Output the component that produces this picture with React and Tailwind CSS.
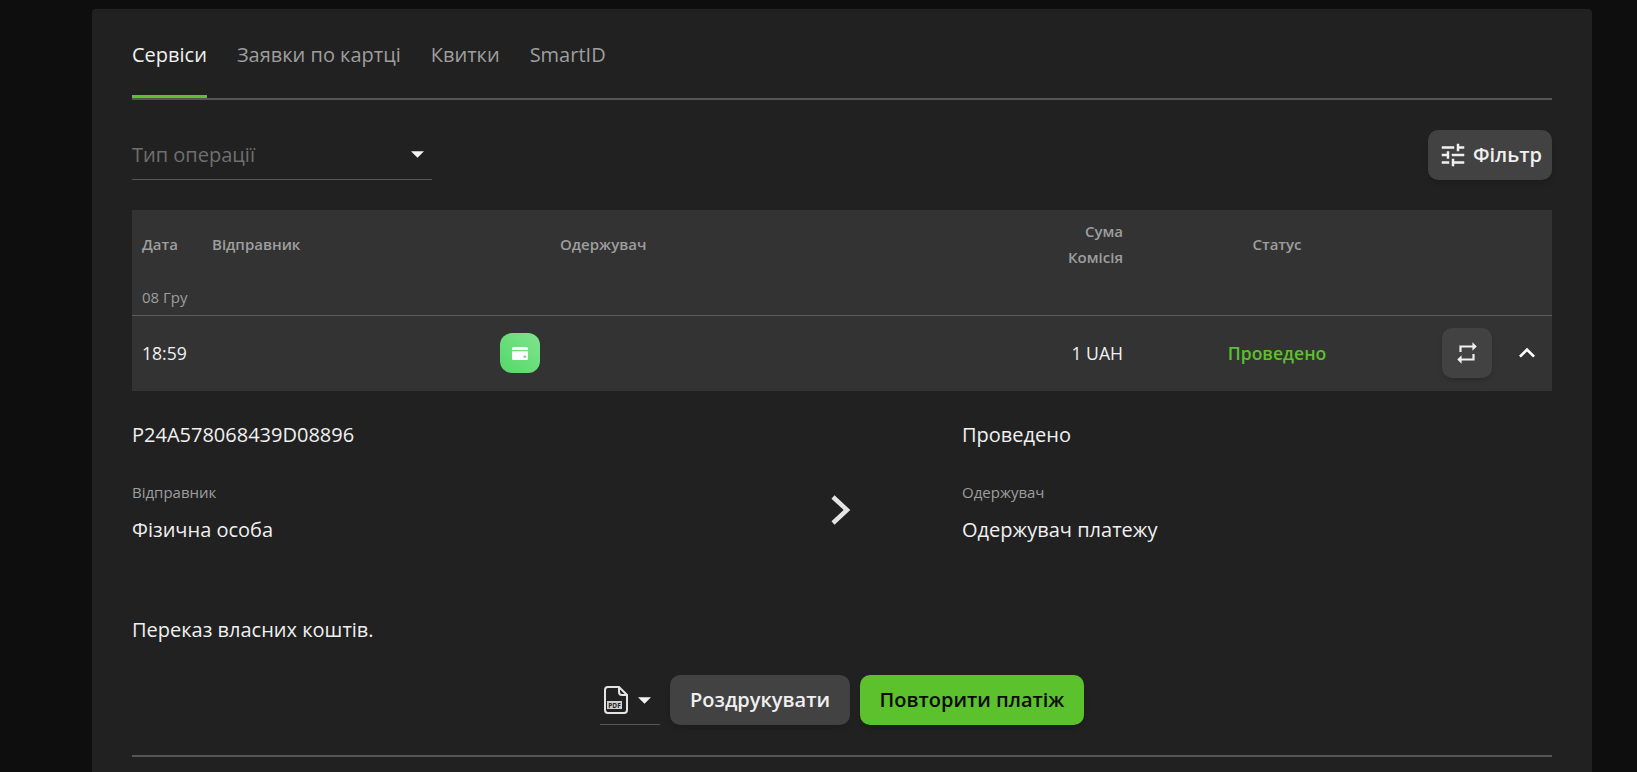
import { MdTune, MdRepeat, MdKeyboardArrowUp } from "react-icons/md";

const tabs = ["Заявки по картці", "Квитки", "SmartID"];

const Caret = ({ className }) => (
  <svg width="13" height="7" viewBox="0 0 14 7" className={className}>
    <path d="M0 0h14L7 7z" fill="#f2f2f2" />
  </svg>
);

const PdfIcon = () => (
  <svg width="24" height="28" viewBox="0 0 24 28" fill="none">
    <path d="M4 1h11l8 8v15a3 3 0 0 1-3 3H4a3 3 0 0 1-3-3V4a3 3 0 0 1 3-3z" stroke="#e4e4e4" strokeWidth="2" />
    <path d="M15 1v5a3 3 0 0 0 3 3h5" stroke="#e4e4e4" strokeWidth="2" />
    <rect x="3" y="15" width="15" height="8" fill="#cfcfcf" />
    <text x="10.5" y="21.5" textAnchor="middle" fontSize="6.5" fontWeight="700" fill="#212121" fontFamily="'Open Sans', sans-serif">PDF</text>
  </svg>
);

const CardIcon = () => (
  <svg width="16" height="13" viewBox="0 0 16 13">
    <path d="M1.5 0h13A1.5 1.5 0 0 1 16 1.5V3H0V1.5A1.5 1.5 0 0 1 1.5 0z" fill="#fff" />
    <path d="M0 4.2h16v7.3a1.5 1.5 0 0 1-1.5 1.5h-13A1.5 1.5 0 0 1 0 11.5z" fill="#fff" />
    <rect x="11.5" y="8.8" width="2.5" height="1.8" fill="#5fd672" />
  </svg>
);

export default function App() {
  return (
    <div className="h-screen overflow-hidden bg-[#0e0e0e] font-['Open_Sans',sans-serif] pt-[9px]">
      <div className="ml-[92px] w-[1500px] h-[900px] bg-[#212121] rounded-t px-10">
        {/* tabs */}
        <div className="flex gap-[30px] h-[91px] border-b-2 border-[#555555] text-[20px] text-[#9e9e9e]">
          <div className="text-[#f0f0f0] h-[89px] border-b-[3px] border-[#5bc12c] pt-[32px] leading-[28px]">Сервіси</div>
          {tabs.map((t) => (
            <div key={t} className="pt-[32px] leading-[28px]">{t}</div>
          ))}
        </div>

        {/* filter row */}
        <div className="flex justify-between items-start mt-[30px]">
          <div className="w-[300px] h-[50px] border-b border-[#555555] flex items-center justify-between pr-[8px] text-[20px] text-[#6f6f6f]">
            <span>Тип операції</span>
            <Caret />
          </div>
          <button className="w-[124px] h-[50px] rounded-[10px] bg-[#424242] shadow-md flex items-center justify-center gap-[5px] text-[#f0f0f0] text-[20px] font-semibold">
            <MdTune size={30} />
            <span>Фільтр</span>
          </button>
        </div>

        {/* table */}
        <div className="mt-[30px] bg-[#333333]">
          <div className="relative h-[106px] border-b border-[#5a5a5a] text-[15px] font-semibold text-[#9e9e9e] grid grid-cols-[80px_288px_450px_173px_308px] pt-[8px]">
            <div className="pl-[10px] pt-[15px]">Дата</div>
            <div className="pt-[15px]">Відправник</div>
            <div className="pl-[60px] pt-[15px]">Одержувач</div>
            <div className="text-right leading-[26px]">
              <div>Сума</div>
              <div>Комісія</div>
            </div>
            <div className="text-center pt-[15px]">Статус</div>
            <div className="absolute left-[10px] top-[76px] text-[15px] font-normal">08 Гру</div>
          </div>
          <div className="h-[75px] pb-[1px] grid grid-cols-[80px_288px_450px_173px_308px_1fr] items-center">
            <div className="pl-[10px] text-[17.6px] text-[#f0f0f0]">18:59</div>
            <div />
            <div>
              <div className="w-10 h-10 rounded-xl bg-gradient-to-bl from-[#7fe48c] to-[#52d86a] flex items-center justify-center">
                <CardIcon />
              </div>
            </div>
            <div className="text-right text-[17.6px] text-[#f0f0f0]">1 UAH</div>
            <div className="text-center text-[17.6px] font-semibold text-[#5bc12c]">Проведено</div>
            <div className="flex items-center pl-[11px] gap-[19px]">
              <button className="w-[50px] h-[50px] rounded-[10px] bg-[#424242] shadow-md flex items-center justify-center text-[#f0f0f0]">
                <MdRepeat size={26} />
              </button>
              <MdKeyboardArrowUp size={32} className="text-white" />
            </div>
          </div>
        </div>

        {/* details */}
        <div className="relative grid grid-cols-[830px_1fr] pt-[30px] text-[20px] leading-[28px] text-[#f0f0f0]">
          <div>
            <div>P24A578068439D08896</div>
            <div className="mt-[33px] text-[15px] leading-[20px] text-[#9e9e9e]">Відправник</div>
            <div className="mt-[14px]">Фізична особа</div>
          </div>
          <div>
            <div>Проведено</div>
            <div className="mt-[33px] text-[15px] leading-[20px] text-[#9e9e9e]">Одержувач</div>
            <div className="mt-[14px]">Одержувач платежу</div>
          </div>
          <svg width="20" height="30" viewBox="0 0 20 30" className="absolute left-[699px] top-[104px]">
            <path d="M2 2l14 13L2 28" fill="none" stroke="#e4e4e4" strokeWidth="4.5" />
          </svg>
        </div>

        <div className="mt-[72px] text-[20px] leading-[28px] text-[#f0f0f0]">Переказ власних коштів.</div>

        {/* actions */}
        <div className="mt-[31px] flex justify-center items-start gap-[10px]">
          <div className="w-[60px] h-[50px] border-b border-[#555555] flex items-center gap-[10px] pl-[4px] pt-[1px]">
            <PdfIcon />
            <Caret />
          </div>
          <button className="w-[180px] h-[50px] rounded-[10px] bg-[#424242] shadow-md text-[20px] font-semibold text-[#f0f0f0]">Роздрукувати</button>
          <button className="w-[224px] h-[50px] rounded-[10px] bg-[#5bc12c] shadow-md text-[20px] font-semibold text-[#0a0a0a]">Повторити платіж</button>
        </div>

        <div className="mt-[30px] border-t-2 border-[#555555]" />
      </div>
    </div>
  );
}
